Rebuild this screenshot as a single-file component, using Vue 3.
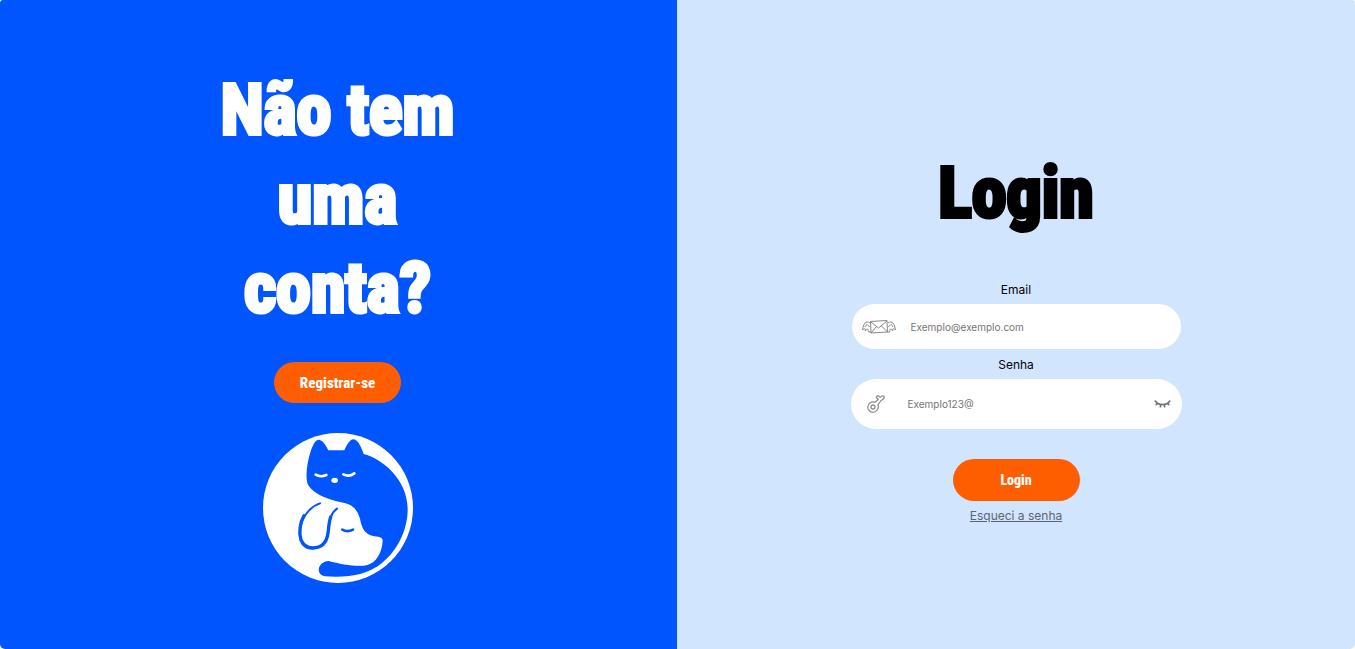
<script setup>
import { ref } from 'vue'

const email = ref('')
const password = ref('')
const visible = ref(false)
</script>

<template>
  <main class="page">
    <section class="panel invite">
      <h1 class="title">Não tem<br />uma<br />conta?</h1>
      <button class="action register" type="button">Registrar-se</button>
      <svg class="logo" viewBox="24 24 450 450" role="img" aria-label="Gato e cachorro">
        <circle cx="249" cy="249" r="225" fill="#fff" />
        <path
          fill="#05f"
          d="M191 44C201 45 212 57 220 76H268C277 56 286 43 295 43C307 43 318 63 326 87C382 101 458 164 458 253C458 316 426 379 381 414C338 450 275 459 211 454C181 450 186 411 221 408C258 418 304 426 335 421C363 414 382 383 383 345C381 333 361 337 346 331C326 321 320 306 315 281C306 250 288 236 258 232C216 222 177 208 160 181C149 160 156 111 168 76C175 56 183 44 191 44Z"
        />
        <g fill="none" stroke-linecap="round">
          <path stroke="#fff" stroke-width="8" d="M182 149Q197 158 214 150M265 148Q282 157 298 145" />
          <path stroke="#05f" stroke-width="8" d="M262 314Q277 323 294 314" />
          <path
            stroke="#05f"
            stroke-width="6"
            d="M195 235C165 245 137 278 134 320C133 354 151 370 174 370C203 369 217 350 220 315C223 286 227 264 246 251"
          />
          <path
            stroke="#05f"
            stroke-width="10"
            d="M147 272C135 292 131 324 138 345C145 362 158 369 173 369C200 369 215 352 219 325C221 309 222 290 227 276"
          />
        </g>
        <ellipse cx="239" cy="166" rx="10" ry="8" fill="#fff" />
      </svg>
    </section>

    <section class="panel access">
      <h2 class="title">Login</h2>
      <form class="form" @submit.prevent>
        <label class="label" for="email">Email</label>
        <div class="field email">
          <svg class="mail-icon" viewBox="0 0 34 16" aria-hidden="true">
            <g fill="none" stroke="#888" stroke-width="1" stroke-linejoin="round">
              <path d="M8.500 2.500L25 1.500L25.500 13L9 14ZM9 3L16.500 9L25 2M9 14L14.500 7.500M25.500 13L19.500 7" />
              <path d="M8 4C4 1 1 5 .7 11C2 9 3 9 3.500 12C4.500 9 6 9 6.500 13L9 13M3 8C4 5 6 5 7.500 8" />
              <path d="M26 4C30 1 33 5 33.300 11C32 9 31 9 30.500 12C29.500 9 28 9 27.500 13L25 13M31 8C30 5 28 5 26.500 8" />
            </g>
          </svg>
          <input id="email" v-model="email" class="entry" type="email" placeholder="Exemplo@exemplo.com" />
        </div>
        <label class="label" for="password">Senha</label>
        <div class="field password">
          <svg class="key-icon" viewBox="0 0 18 18" aria-hidden="true">
            <g fill="none" stroke="#909090" stroke-width="1.300" stroke-linejoin="round">
              <path d="M8 7.300L11.200 4.500L9.500 2.500Q9.500 .5 11.500 1L13.200 2.200L15.200 .8Q17.500 .7 17.200 2.700L15 5L14 5.500L11 9.800C12.500 13 9.500 17.300 6 17.300C2.800 17.300 .8 15 .8 12.200C.8 8.500 4.500 5.800 8 7.300Z" />
              <circle cx="6" cy="12" r="2" />
            </g>
          </svg>
          <input
            id="password"
            v-model="password"
            class="entry"
            :type="visible ? 'text' : 'password'"
            placeholder="Exemplo123@"
          />
          <button class="reveal" type="button" aria-label="Mostrar senha" @click="visible = !visible">
            <svg class="eye-icon" viewBox="0 0 16 8" aria-hidden="true">
              <path
                fill="none"
                stroke="#707070"
                stroke-width="1.600"
                stroke-linecap="round"
                d="M.8 1C4 5.700 12 5.700 15.200 1M2.800 3.200L1.700 4.700M6.200 4.800L5.800 6.800M9.800 4.800L10.200 6.800M13.200 3.200L14.300 4.700"
              />
            </svg>
          </button>
        </div>
        <button class="action submit" type="submit">Login</button>
        <a class="forgot" href="#">Esqueci a senha</a>
      </form>
    </section>
  </main>
</template>

<style>
body {
  margin: 0;
  background: #fff;
}
</style>

<style scoped>
.page {
  display: grid;
  grid-template-columns: 677fr 678fr;
  min-height: 100vh;
  overflow: hidden;
  border-radius: 3px 3px 5px 5px;
  font-family: Inter, "Liberation Sans", sans-serif;
}

.panel {
  display: flex;
  flex-direction: column;
  align-items: center;
  justify-content: center;
  box-sizing: border-box;
}

.invite {
  padding-right: 2px;
  background: #05f;
  color: #fff;
}

.access {
  padding-top: 24px;
  background: #d2e5ff;
  color: #000;
}

.title {
  margin: 0;
  font-family: "Roboto Condensed", Roboto, sans-serif;
  font-size: 70px;
  font-weight: 700;
  line-height: 89px;
  text-align: center;
  -webkit-text-stroke: 4px currentColor;
}

.action {
  width: 127px;
  height: 42px;
  padding: 0;
  border: 0;
  border-radius: 21px;
  background: #ff5e00;
  color: #fff;
  font-family: "Roboto Condensed", Roboto, sans-serif;
  font-size: 14px;
  font-weight: 800;
  cursor: pointer;
}

.register {
  height: 41px;
  margin: 29px 0 30px;
  font-size: 15px;
}

.logo {
  width: 150px;
  height: 150px;
}

.form {
  display: flex;
  flex-direction: column;
  align-items: center;
  margin-top: 44px;
}

.label {
  font-size: 12px;
  line-height: 16px;
}

.field {
  display: flex;
  align-items: center;
  box-sizing: border-box;
  margin-top: 6px;
  background: #fff;
}

.email {
  width: 329px;
  height: 45px;
  margin-bottom: 8px;
  padding: 0 24px 0 10px;
  border-radius: 23px;
  gap: 15px;
}

.password {
  width: 331px;
  height: 50px;
  padding: 0 11px 0 16px;
  border-radius: 25px;
  gap: 23px;
}

.mail-icon {
  width: 34px;
  height: 16px;
}

.key-icon {
  width: 18px;
  height: 18px;
}

.entry {
  flex: 1;
  min-width: 0;
  padding: 0;
  border: 0;
  outline: 0;
  background: transparent;
  font-family: inherit;
  font-size: 10px;
  line-height: 16px;
}

.entry::placeholder {
  color: #757575;
}

.reveal {
  display: flex;
  padding: 0;
  border: 0;
  background: transparent;
  cursor: pointer;
}

.eye-icon {
  width: 17px;
  height: 8px;
}

.submit {
  margin-top: 30px;
}

.forgot {
  margin-top: 7px;
  color: #5b6570;
  font-size: 12px;
  line-height: 16px;
}
</style>
